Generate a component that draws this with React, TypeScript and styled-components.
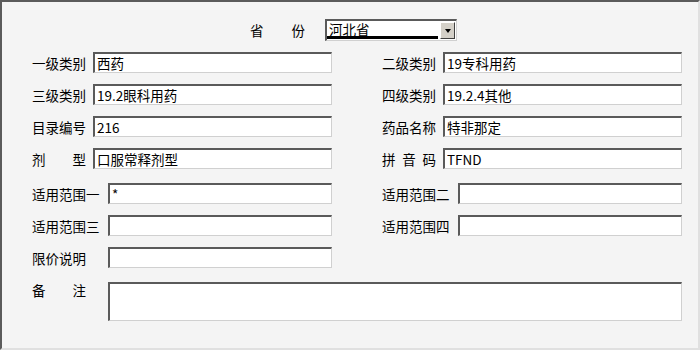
import styled, { createGlobalStyle } from "styled-components"

const Global = createGlobalStyle`
	html, body {
		margin: 0;
		padding: 0;
		background: #f4f4f4;
	}
	* {
		box-sizing: border-box;
	}
`

const Frame = styled.div`
	width: 700px;
	height: 350px;
	background: #f4f4f4;
	border-top: 2px solid #5b5b5b;
	border-left: 2px solid #5b5b5b;
	border-right: 2px solid #e0e0e0;
	border-bottom: 2px solid #e0e0e0;
	padding: 17px 0 0 30px;
	font-family: "Noto Sans CJK SC", sans-serif;
	font-size: 13.5px;
	line-height: 16px;
	color: #000;
`

const ProvinceRow = styled.div`
	display: flex;
	align-items: center;
	gap: 20px;
	height: 22px;
	padding-left: 218px;
`

const Label = styled.span<{ $w: number; $spread?: boolean; $pr?: number }>`
	display: flex;
	flex: none;
	width: ${(p) => p.$w}px;
	padding-right: ${(p) => p.$pr ?? 0}px;
	justify-content: ${(p) => (p.$spread ? "space-between" : "flex-start")};
	white-space: nowrap;
`

const Combo = styled.div`
	display: flex;
	width: 132px;
	height: 22px;
	background: #fff;
	border-top: 2px solid #5a5a5a;
	border-left: 2px solid #5a5a5a;
	border-right: 1px solid #d0d0d0;
	border-bottom: 1px solid #d0d0d0;
`

const ComboText = styled.div`
	flex: 1;
	padding: 0 2px;
	line-height: 16px;
	border-bottom: 3px solid #000;
	margin-bottom: 1px;
`

const ArrowButton = styled.div`
	flex: none;
	width: 15px;
	margin: 1px 1px 1px 2px;
	background: #d4d0c8;
	border-top: 1px solid #fff;
	border-left: 1px solid #fff;
	border-right: 1px solid #404040;
	border-bottom: 1px solid #404040;
	display: flex;
	align-items: center;
	justify-content: center;

	&::after {
		content: "";
		border-left: 3.5px solid transparent;
		border-right: 3.5px solid transparent;
		border-top: 4px solid #000;
	}
`

const Grid = styled.div<{ $mt: number }>`
	display: grid;
	grid-template-columns: 300px 300px;
	column-gap: 50px;
	row-gap: 11px;
	margin-top: ${(p) => p.$mt}px;
`

const Row = styled.div`
	display: flex;
	align-items: center;
	gap: 7px;
	height: 21px;
`

const Input = styled.input`
	flex: 1;
	min-width: 0;
	height: 21px;
	margin: 0;
	padding: 0 2px;
	background: #fff;
	border-top: 2px solid #5a5a5a;
	border-left: 2px solid #5a5a5a;
	border-right: 1px solid #d0d0d0;
	border-bottom: 1px solid #d0d0d0;
	font-family: "Noto Sans CJK SC", sans-serif;
	font-size: 13.5px;
	color: #000;
	outline: none;
`

const RemarkRow = styled.div`
	display: flex;
	align-items: flex-start;
	gap: 7px;
	width: 650px;
	margin-top: 14px;
`

const RemarkBox = styled.textarea`
	flex: 1;
	height: 39px;
	margin: 0;
	resize: none;
	background: #fff;
	border-top: 2px solid #5a5a5a;
	border-left: 2px solid #5a5a5a;
	border-right: 1px solid #d0d0d0;
	border-bottom: 1px solid #d0d0d0;
	font-family: "Noto Sans CJK SC", sans-serif;
	font-size: 13.5px;
	outline: none;
`

type F = { label: string; value: string; w: number; spread?: boolean }

const top: F[] = [
	{ label: "一级类别", value: "西药", w: 54 },
	{ label: "二级类别", value: "19专科用药", w: 54 },
	{ label: "三级类别", value: "19.2眼科用药", w: 54 },
	{ label: "四级类别", value: "19.2.4其他", w: 54 },
	{ label: "目录编号", value: "216", w: 54 },
	{ label: "药品名称", value: "特非那定", w: 54 },
	{ label: "剂型", value: "口服常释剂型", w: 54, spread: true },
	{ label: "拼音码", value: "TFND", w: 54, spread: true },
]

const scope: F[] = [
	{ label: "适用范围一", value: "*", w: 69 },
	{ label: "适用范围二", value: "", w: 69 },
	{ label: "适用范围三", value: "", w: 69 },
	{ label: "适用范围四", value: "", w: 69 },
	{ label: "限价说明", value: "", w: 69 },
]

function Field({ f }: { f: F }) {
	return (
		<Row>
			<Label $w={f.w} $spread={f.spread}>
				{f.spread ? f.label.split("").map((c) => <span key={c}>{c}</span>) : f.label}
			</Label>
			<Input readOnly value={f.value} />
		</Row>
	)
}

export default function App() {
	return (
		<>
			<Global />
			<Frame>
				<ProvinceRow>
					<Label $w={55} $spread>
						<span>省</span>
						<span>份</span>
					</Label>
					<Combo>
						<ComboText>河北省</ComboText>
						<ArrowButton />
					</Combo>
				</ProvinceRow>
				<Grid $mt={11}>
					{top.map((f) => (
						<Field key={f.label} f={f} />
					))}
				</Grid>
				<Grid $mt={14}>
					{scope.map((f) => (
						<Field key={f.label} f={f} />
					))}
				</Grid>
				<RemarkRow>
					<Label $w={69} $pr={15} $spread>
						<span>备</span>
						<span>注</span>
					</Label>
					<RemarkBox readOnly />
				</RemarkRow>
			</Frame>
		</>
	)
}
